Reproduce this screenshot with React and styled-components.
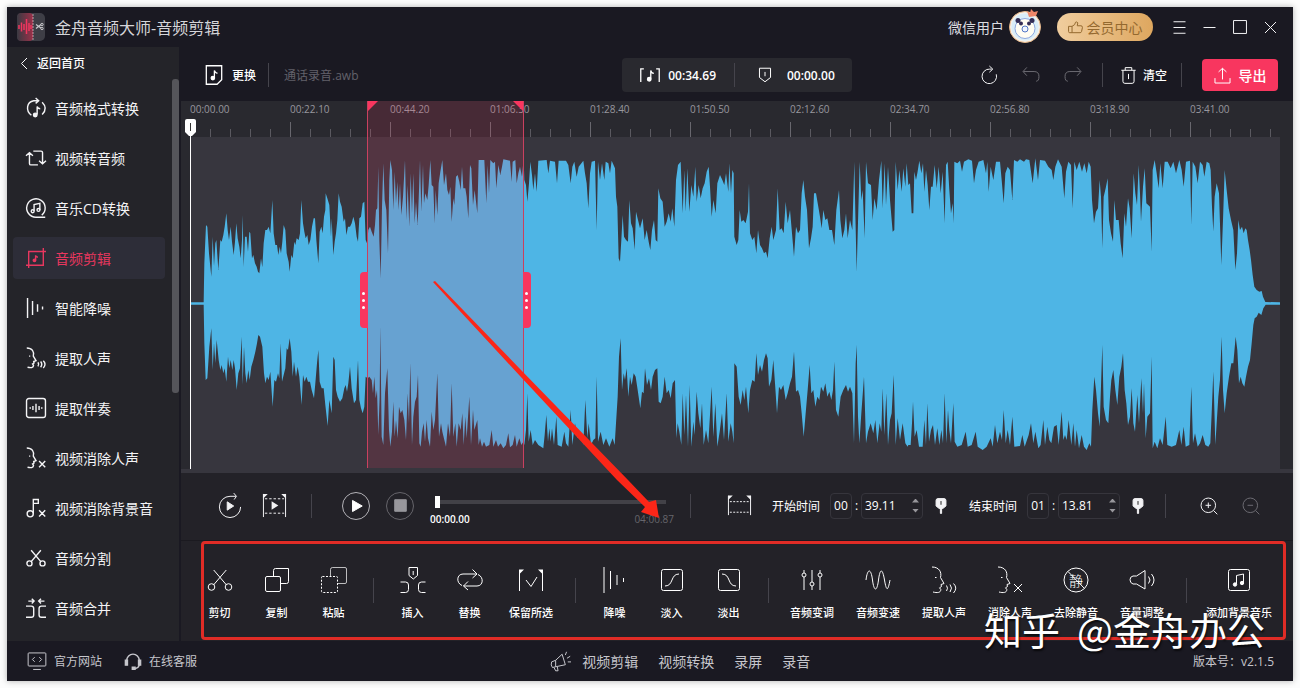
import { useState } from "react";
import { createGlobalStyle, styled } from "styled-components";

const DURATION = 240.87;

// Outline of the decoded audio, as x,y pairs, in blocks that start at `at`
const WAVE_BLOCKS = [
	{
		at: 0,
		top: `0,517 41,517 43,400 48,285 52,290 57,370 64,440 68,320 72,408 76,340 79,330 85,420 91,330 95,335 100,315 104,290 109,250 113,300 117,330 122,290 126,335 131,375 135,335 139,280 143,325 148,350 152,385 156,330 158,255 161,410 165,320 170,320 174,365 178,305 181,310 186,385 190,375 195,400 200,410 204,425 208,430 213,385 217,412 221,340 226,300 231,300 236,290 241,310 247,210 251,310 256,345 261,345 265,375 269,350 273,370 277,335 281,285 286,300 290,370 296,395 299,425 304,375 308,385 313,335 316,345 320,325 326,330 330,310 334,210 339,280 343,305 347,325 352,315 356,345 361,330 366,290 371,265 375,265 379,330 385,400 389,305 394,290 398,310 402,260 406,240 407,190 412,205 418,225 423,320 425,265 430,375 434,335 438,310 442,270 446,190 450,215 455,230 461,275 465,265 469,315 474,290 480,290 485,280 490,260 495,280 500,320 504,335 508,265 513,260 518,220 523,215 527,330 531,340 535,300 540,290 545,305 551,320 555,285 558,240 562,235 565,110 568,330 572,445 576,230 580,100 584,210 589,240 594,370 598,150 601,90 606,120 610,240 614,125 618,220 622,155 626,240 630,160 634,255 639,200 645,90 649,270 653,165 658,290 662,130 666,250 670,130 674,280 678,215 683,285 687,180 690,90 694,245 699,105 702,220 706,190 712,210 716,165 721,90 725,165 730,170 734,280 737,180 742,255 746,160 751,125 757,90 762,165 768,130 772,180 777,195 781,170 785,275 790,205 793,225 798,140 803,135 808,155 812,180 816,110 820,175 826,175 830,200 835,265 840,105 844,115 849,225 854,180 862,250 866,90 883,90 889,220 893,105 897,190 901,90 910,100 915,95 919,175 925,105 931,135 936,110 940,88 960,92 965,155 968,95 976,90 980,160 985,130 990,110 996,140 1001,85`,
		bottom: `0,524 41,524 43,640 47,750 52,745 58,650 64,595 68,720 72,640 76,700 80,630 86,690 91,720 95,705 100,730 104,715 109,755 114,680 118,715 122,690 127,720 131,690 135,715 140,780 145,730 150,715 155,620 158,765 162,650 166,730 170,760 175,720 179,750 184,710 190,690 196,665 201,640 205,615 210,620 217,650 222,730 226,760 231,740 236,750 241,725 248,830 253,750 258,755 264,730 268,745 272,640 276,755 281,735 286,715 290,655 294,660 299,625 304,665 308,740 312,695 318,740 323,710 328,740 335,825 339,735 344,755 349,740 354,755 360,755 365,780 372,805 376,760 381,700 385,660 389,755 395,775 401,775 406,825 413,888 418,810 425,850 430,680 434,690 438,780 443,800 450,815 457,805 463,775 467,765 471,785 475,760 480,710 485,775 492,820 498,810 504,690 508,810 513,835 518,850 523,830 527,740 533,745 538,740 545,750 549,790 553,740 557,805 561,780 565,915 569,800 571,590 575,920 580,945 585,790 592,715 597,900 601,950 606,905 610,815 614,920 618,870 623,925 627,830 632,850 637,840 643,870 648,930 653,790 657,880 661,700 666,945 670,860 675,815 680,800 684,735 688,940 692,950 696,905 701,880 705,935 710,870 714,925 720,950 725,845 730,900 735,870 742,730 747,920 753,880 757,905 768,950 774,880 780,920 785,760 790,920 796,880 800,950 806,880 812,900 817,850 821,945 826,860 830,925 838,800 843,945 849,840 853,900 862,870 866,945 870,925 876,950 882,935 888,950 898,945 905,900 910,950 918,930 924,950 932,940 940,955 948,945 955,910 960,952 968,945 975,915 980,950 988,925 994,945 1000,935`,
	},
	{
		at: 990,
		top: `13,150 18,165 22,215 27,160 31,95 36,135 40,180 45,130 50,185 55,92 80,90 85,130 90,92 105,95 111,160 116,92 138,92 145,105 152,160 157,110 163,95 170,140 176,110 190,92 195,130 200,160 205,235 210,130 215,95 225,92 230,300 234,95 240,150 246,100 253,150 257,95 265,100 270,130 275,92 285,115 288,200 292,230 296,385 300,395 304,330 308,255 312,320 318,330 324,335 328,210 333,280 338,295 344,360 348,245 354,270 360,295 368,265 374,330 380,300 386,335 391,360 396,300 402,270 407,330 412,335 415,175 421,205 428,215 434,290 440,275 446,250 452,275 457,235 463,290 468,150 474,105 482,95 488,250 493,120 497,245 502,115 508,245 514,165 520,200 526,110 530,215 536,165 542,205 548,175 554,160 560,125 566,110 570,170 575,260 580,210 587,250 592,160 600,135 607,150 613,165 618,130 625,185 628,100 633,190 637,120 641,130 643,320 650,345 655,330 659,240 664,275 670,270 677,280 684,245 687,160 690,310 697,330 703,320 709,370 714,300 720,345 726,355 732,370 738,365 743,385 749,325 755,290 760,330 768,300 773,175 779,300 785,295 791,310 797,215 803,280 810,240 816,310 822,380 828,290 834,310 840,300 845,190 850,150 855,200 861,240 867,355 873,325 878,290 882,190 888,190 894,225 900,260 905,295 910,240 916,270 922,265 928,300 936,300 943,345 949,240 957,180 961,270 967,325 973,300 978,250 983,325 990,270 997,300 1003,95 1006,250 1010,425 1015,240 1019,95 1024,210 1028,180 1034,325 1038,95 1044,160 1053,165 1058,270 1063,205 1070,240 1077,150 1084,92 1088,235 1094,100 1098,225 1104,110 1110,210 1118,305 1123,300 1127,95 1133,180 1138,120 1145,185 1150,115 1156,170 1160,100`,
		bottom: `13,945 18,900 22,790 26,935 32,900 38,945 45,930 55,945 70,955 74,915 79,855 84,935 88,895 92,935 96,895 102,945 109,860 113,945 125,950 133,905 138,940 145,950 152,840 157,945 165,880 172,925 180,905 190,945 196,810 202,925 206,880 213,945 220,930 226,925 230,740 234,935 242,905 250,945 258,925 268,950 278,925 284,945 288,880 293,800 297,680 302,625 306,780 311,730 315,750 320,715 325,800 330,740 335,765 341,730 347,740 353,780 361,835 366,785 371,790 375,715 381,765 387,745 393,780 398,740 405,720 412,715 416,815 422,820 428,800 434,740 440,790 446,780 452,805 458,760 465,750 469,925 473,880 478,905 484,945 488,790 493,915 498,795 504,950 509,765 514,950 520,875 524,915 530,785 535,850 541,895 546,820 551,945 558,900 565,940 575,770 580,920 586,820 592,950 599,905 606,850 612,930 620,790 625,935 632,880 637,905 641,940 643,700 650,710 656,800 662,825 668,780 673,810 678,770 685,850 690,780 697,750 704,755 709,670 714,735 720,705 726,725 732,690 738,670 743,685 747,770 754,750 760,690 765,760 771,850 777,770 783,780 790,765 797,810 803,790 810,760 816,740 822,665 828,785 834,780 840,800 845,850 851,920 857,850 863,780 869,705 874,790 880,780 886,830 892,800 898,810 903,770 910,785 916,760 922,800 928,785 934,810 939,780 943,695 948,840 955,860 962,800 970,780 978,765 984,785 990,770 997,790 1002,940 1007,700 1010,645 1014,860 1018,940 1024,850 1032,740 1038,940 1044,905 1052,880 1060,910 1066,870 1072,940 1079,880 1084,905 1088,775 1093,915 1099,790 1104,945 1110,870 1115,850 1121,735 1127,945 1133,865 1140,930 1148,880 1156,940 1163,950`,
	},
	{
		at: 2130,
		top: `25,165 30,160 35,250 40,250 43,125 48,150 52,130 58,92 64,130 69,100 73,185 78,120 83,165 88,240 93,170 98,170 104,105 110,175 116,110 122,190 128,125 134,280 138,105 143,95 148,180 153,250 158,220 161,280 163,95 172,100 180,92 186,125 192,95 205,88 216,92 222,160 228,120 236,95 250,90 258,130 262,95 266,185 272,110 280,150 288,95 300,95 305,150 311,220 316,130 323,110 330,120 337,210 342,90 352,95 360,88 372,95 378,88 388,90 398,160 406,85 414,150 420,90 435,92 445,110 455,120 460,150 466,110 474,88 485,110 493,205 498,125 505,95 513,105 518,235 523,95 530,120 538,95 546,125 553,100 560,130 566,95 572,110 576,210 582,280 588,245 594,235 599,150 603,200 607,355 611,200 617,175 623,145 627,270 633,310 639,335 643,210 648,270 656,270 662,340 668,385 673,250 678,290 684,205 689,235 695,325 701,130 706,190 711,225 716,105 720,190 723,275 729,170 734,115 739,220 750,230 755,365 758,120 764,90 770,130 776,175 781,100 788,175 794,95 803,95 812,115 820,95 828,130 838,90 845,120 851,170 858,95 870,92 874,285 878,95 886,110 893,160 900,95 908,105 913,140 920,95 928,100 932,120 936,230 940,305 944,200 950,160 957,190 964,405 969,270 974,120 980,180 986,235 993,270 1000,300 1006,420 1011,370 1015,270 1020,300 1026,290 1031,310 1036,295 1040,300 1044,330 1049,360 1053,390 1058,435 1063,470 1070,480 1078,485 1085,483 1089,500 1096,516 1140,517`,
		bottom: `25,945 32,945 36,880 39,815 44,920 50,900 57,950 68,950 73,870 78,945 82,820 87,935 93,900 99,885 105,945 112,895 118,945 124,900 129,940 134,790 139,940 144,840 148,900 153,940 160,820 164,935 172,950 185,945 197,905 203,950 215,945 227,905 233,950 248,960 260,950 272,925 278,950 285,885 292,940 300,905 306,930 311,840 317,940 323,900 330,945 337,860 343,950 360,948 367,915 374,950 386,915 393,880 400,940 406,905 415,955 422,945 430,870 435,945 442,890 448,930 454,940 462,890 470,885 476,945 485,845 490,930 495,915 500,930 506,870 514,945 520,880 525,950 530,900 537,955 545,915 552,950 560,960 568,940 573,950 577,840 583,740 588,780 594,850 599,890 607,645 611,830 618,870 625,880 630,800 634,750 640,720 646,780 652,825 658,740 664,710 669,670 674,780 679,820 684,885 690,860 695,775 700,880 705,905 712,795 717,880 724,745 729,850 732,760 737,925 742,860 750,850 755,680 758,955 764,935 772,955 780,925 788,945 797,860 802,945 815,950 828,945 838,900 844,945 851,890 857,950 868,945 874,770 879,940 885,910 893,950 900,940 908,915 916,945 925,950 931,940 935,850 940,725 946,945 950,880 955,800 960,750 965,620 969,780 974,850 980,790 987,740 994,700 1000,700 1007,620 1012,660 1017,760 1022,740 1027,760 1033,770 1038,740 1044,710 1050,690 1055,640 1060,585 1064,565 1070,560 1076,548 1084,555 1090,535 1097,524 1140,524`,
	},
];

function readEdge(edge) {
	return WAVE_BLOCKS.flatMap((block) =>
		block[edge].split(" ").map((pair) => {
			const [x, y] = pair.split(",").map(Number);
			return `${x + block.at},${y}`;
		})
	);
}

const wavePoints = [...readEdge("top"), ...readEdge("bottom").reverse()].join(" ");

const rulerLabels = [
	"00:00.00",
	"00:22.10",
	"00:44.20",
	"01:06.30",
	"01:28.40",
	"01:50.50",
	"02:12.60",
	"02:34.70",
	"02:56.80",
	"03:18.90",
	"03:41.00",
];

// Drawings on a 26 x 26 grid
const shapes = {
	convert: (
		<>
			<path d='M7 22.500C-1 16 1 5 10 3.500h6M12.500 0l4 3.500-4 3.500M21 5.500c5 5 5 11 0 16' />
			<path d='M14.500 21.500V11q1 3 4 3' />
			<circle cx='12' cy='22' r='2.300' fill='currentColor' />
		</>
	),
	swap: <path d='M4.500 6v14q0 2 2 2h9M0 10l4.500-4L9 10M9.500 4h10q2 0 2 2v14M17 16.500l4.500 4 4.500-4' />,
	disc: (
		<>
			<path d='M13 25a12 12 0 1 1 7.500-2.700M13 25h12' />
			<path d='M10.500 17V8.500l7.500-1.500v8.500' />
			<circle cx='8.700' cy='17.200' r='1.900' />
			<circle cx='16.200' cy='15.500' r='1.900' />
		</>
	),
	crop: (
		<>
			<path d='M3.500 26V4.500H26M0 22.500h22.500V0' />
			<path d='M12.500 16V9.500q0 2 3 2.500' />
			<circle cx='11' cy='16' r='1.600' fill='currentColor' />
		</>
	),
	bars: <path d='M2 0v26M8.500 4v18M15 8v10M21.500 11v4' />,
	voice: (
		<>
			<path d='M1 0C8 0 11 5 9.500 10.500l3.500 6-3 1 .5 2-2 1.300 1.300 1.700C9.800 26 6 26 2 25' />
			<path d='M4 10.500h1.500M15.500 18.500q2 2.700 0 5.500M19 17.500q3 3.500 0 7.500M22.500 16.500q4.500 4.500 0 9.500' />
		</>
	),
	mute: (
		<>
			<path d='M1 0C8 0 11 5 9.500 10.500l3.500 6-3 1 .5 2-2 1.300 1.300 1.700C9.800 26 6 26 2 25' />
			<path d='M4 10.500h1.500M17 17l8 8M25 17l-8 8' />
		</>
	),
	backing: (
		<>
			<rect x='.700' y='.700' width='24.600' height='24.600' rx='3' />
			<path d='M5.500 12v2M9 10.500v5M13 7.500v11M17 10.500v5M20.500 12v2' />
		</>
	),
	noteOff: (
		<>
			<path d='M9.500 20V2h6.500v5H9.500M17 16l8 8M25 16l-8 8' />
			<circle cx='5.500' cy='20.500' r='4' />
		</>
	),
	scissors: (
		<>
			<path d='M6.700 3l12.800 15M19.300 3L6.500 18' />
			<circle cx='4.500' cy='20' r='3.300' />
			<circle cx='21.500' cy='20' r='3.300' />
		</>
	),
	merge: (
		<path d='M0 10.500h7q3 0 3 3v8.500q0 3-3 3H0M26 10.500h-6q-3 0-3 3v8.500q0 3 3 3H26M3 4h7.500M7.500 1l3 3-3 3M24 4h-7.500M19.500 1l-3 3 3 3' />
	),
	copy: (
		<>
			<rect x='1.500' y='9.500' width='15' height='15' rx='1.500' />
			<path d='M9.500 9.500v-6q0-2 2-2h13v13q0 2-2 2h-6' />
		</>
	),
	paste: (
		<>
			<rect x='.500' y='9.500' width='16' height='16' rx='1' strokeDasharray='2 1.500' />
			<path d='M9.500 9.500v-7q0-2 2-2H24q1.500 0 1.500 1.500v13q0 1.500-1.500 1.500h-7.500' opacity='.7' />
		</>
	),
	insert: (
		<path d='M9 .500h8.500v8l-4.200 3.500L9 8.500zM13.200 4v4M.500 15h5q3 0 3 3v4.500q0 3-3 3h-5M25.500 15h-4q-3 0-3 3v4.500q0 3 3 3h4' />
	),
	replace: (
		<path d='M5 18.500C-1 16-.500 7 6 7h14M15.500 2.500L20 7l-4.500 4M21 7.500c6 2.500 5.500 11.500-1 11.500H6.500M11 14.500L6.500 19l4.500 4' />
	),
	keep: (
		<>
			<path d='M1.500 3v21M24.500 3v21M8 13l5 6.500L19 10' />
			<path d='M1 2.500h5l-5 5zM25 2.500h-5l5 5z' fill='currentColor' stroke='none' />
		</>
	),
	fadeIn: (
		<>
			<rect x='2.500' y='2.500' width='21' height='21' rx='2' />
			<path d='M6 19c9 0 5-12 14-12' />
		</>
	),
	fadeOut: (
		<>
			<rect x='2.500' y='2.500' width='21' height='21' rx='2' />
			<path d='M6 7c9 0 5 12 14 12' />
		</>
	),
	sliders: (
		<>
			<path d='M5 3v3M5 10v13M13 3v12M13 19v4M21 3v3M21 10v13' />
			<circle cx='5' cy='8' r='2' />
			<circle cx='13' cy='17' r='2' />
			<circle cx='21' cy='8' r='2' />
		</>
	),
	wave: <path d='M1 13C2.500 1 6 1 7.500 13s4.500 12 6 0 4-12 6 0 3.500 11 5.500 0' />,
	silence: (
		<>
			<circle cx='13' cy='13' r='12' />
			<text
				x='13'
				y='18.500'
				textAnchor='middle'
				fontSize='14'
				fontWeight='300'
				fill='currentColor'
				stroke='none'
			>
				静
			</text>
			<path d='M5 4.500l16.500 17' />
		</>
	),
	volume: (
		<path d='M16 3.500v18.500L7.500 17H4q-3-1-3-4.200T4 9h3.500zM19.500 9.500q3 3.500 0 7M22.500 7q5 6 0 12' />
	),
	music: (
		<>
			<rect x='2.500' y='2.500' width='21' height='21' rx='2' />
			<path d='M10.500 17V8.500l7-1.500v8.500' />
			<circle cx='9' cy='17.500' r='1.700' fill='currentColor' />
			<circle cx='16' cy='16' r='1.700' fill='currentColor' />
		</>
	),
	replay: (
		<>
			<path d='M24.500 14A11.500 11.500 0 1 1 13 2.500h6.500M17-1l3 3.500L17.500 6' />
			<path d='M10 8.500v9l7-4.500z' fill='currentColor' />
		</>
	),
	playRange: (
		<>
			<path d='M1.500 1v24M24.500 1v24' />
			<path d='M1 1h5L1 6zM25 1h-5l5 5zM10 8.500v9l7-4.500z' fill='currentColor' stroke='none' />
			<path d='M3 6h20M3 21h20' strokeDasharray='2.500 2' />
		</>
	),
	range: (
		<>
			<path d='M1.500 3v20M24.500 3v20' />
			<path d='M1 2.500h5l-5 5zM25 2.500h-5l5 5z' fill='currentColor' stroke='none' />
			<path d='M3 9h20M3 20h20' strokeDasharray='2 1.500' />
		</>
	),
	play: <path d='M8 5v16l14-8z' fill='currentColor' />,
	stop: <path d='M3 3h20v20H3z' fill='currentColor' />,
	pin: (
		<>
			<path d='M8 1h10q3 0 3 3v9l-5 4h-6l-5-4V4q0-3 3-3zM12 17h2v8h-2z' fill='currentColor' />
			<path d='M13 5v6' stroke='#222' />
		</>
	),
	zoomIn: (
		<>
			<circle cx='12' cy='12' r='10.500' />
			<path d='M19.500 19.500L25 25M12 8v8M8 12h8' />
		</>
	),
	zoomOut: (
		<>
			<circle cx='12' cy='12' r='10.500' />
			<path d='M19.500 19.500L25 25M8 12h8' />
		</>
	),
	file: (
		<>
			<path d='M3 1h20v18l-6 6H3z' />
			<path d='M13.500 17V7q1 3 4 4' />
			<circle cx='11.500' cy='17' r='2.200' fill='currentColor' />
		</>
	),
	noteRange: (
		<>
			<path d='M5 5H1v17M21 5h4v17M14 18V7q.500 3.500 4 4' />
			<circle cx='12' cy='18.500' r='2.300' fill='currentColor' />
		</>
	),
	shield: <path d='M4 2h18v15l-9 7-9-7zM13 8v7' />,
	reload: <path d='M23.500 12A10.500 10.500 0 1 1 14 4.500h3M13.500 0l5 4.500-5 4.500' />,
	undo: <path d='M7 2L1.500 8 7 14M2 8h15.500Q24.500 8 24.500 15t-4 7' />,
	redo: <path d='M19 2l5.500 6L19 14M24 8H8.500Q1.500 8 1.500 15t4 7' />,
	trash: <path d='M2 5h22M8 5V1h10v4M4.500 5v17q0 3 3 3h11q3 0 3-3V5M13 10.500v8' />,
	upload: <path d='M13 19V2M7 7.500L13 2l6 5.500M1.500 17v7.500h23V17' />,
	back: <path d='M18 2L7 13l11 11' />,
	thumb: (
		<path d='M1 11h6v11h14q2 0 2.500-2l1.500-7q0-3-2.500-3H16l1-5q-1.500-3-4-1l-1.500 4L7 11M1 11v9q0 2 2 2h4' />
	),
	site: (
		<>
			<rect x='1.500' y='2.500' width='23' height='17' rx='1' />
			<path d='M10 8l-3 3 3 3M16 8l3 3-3 3M8 24h10' />
		</>
	),
	headset: (
		<>
			<path d='M4 15v-3a9 9 0 0 1 18 0v3M22 18q0 5-7 6' />
			<path d='M2 12h3v7H2zM21 12h3v7h-3zM12 22h4v3h-4z' fill='currentColor' />
		</>
	),
	horn: (
		<path d='M2 13.500l5-2v8l-4 1q-2.500-3-1-7zM7 11.500l8-7.500 4 13-12 2.500M5 20.500l2 4h3l-1-5M19 5l1.500-4M21 9l4-2.500M22 13.500h4' />
	),
	menu: <path d='M1 1.500h24M1 13h24M1 24.500h24' />,
	minimize: <path d='M1 13h24' />,
	maximize: <path d='M1 1h24v24H1z' />,
	close: <path d='M2 2l22 22M24 2L2 24' />,
};

function Icon({ name, size = 26, stroke = 1 }) {
	return (
		<IconBox
			width={size}
			height={size}
			viewBox='0 0 26 26'
			strokeWidth={(stroke * 26) / size}
			aria-hidden='true'
		>
			{shapes[name]}
		</IconBox>
	);
}

const menuItems = [
	["convert", "音频格式转换"],
	["swap", "视频转音频"],
	["disc", "音乐CD转换"],
	["crop", "音频剪辑"],
	["bars", "智能降噪"],
	["voice", "提取人声"],
	["backing", "提取伴奏"],
	["mute", "视频消除人声"],
	["noteOff", "视频消除背景音"],
	["scissors", "音频分割"],
	["merge", "音频合并"],
];

const toolGroups = [
	[
		["scissors", "剪切"],
		["copy", "复制"],
		["paste", "粘贴"],
	],
	[
		["insert", "插入"],
		["replace", "替换"],
		["keep", "保留所选"],
	],
	[
		["bars", "降噪"],
		["fadeIn", "淡入"],
		["fadeOut", "淡出"],
	],
	[
		["sliders", "音频变调"],
		["wave", "音频变速"],
		["voice", "提取人声"],
		["mute", "消除人声"],
		["silence", "去除静音"],
		["volume", "音量调整"],
	],
	[["music", "添加背景音乐"]],
];

const toolWidths = { 2: 57, 4: 66, 6: 84 };

function TitleBar() {
	return (
		<TitleRow>
			<AppLogo viewBox='0 0 28 28' aria-hidden='true'>
				<defs>
					<linearGradient id='logoFade'>
						<stop offset='0' stopColor='#3a3a42' />
						<stop offset='1' stopColor='#9c3049' />
					</linearGradient>
				</defs>
				<rect width='28' height='28' rx='5' fill='#3e3e46' />
				<rect width='16' height='28' rx='4' fill='url(#logoFade)' />
				<path
					d='M2 12v4M4.500 9.500v9M7 11v6M9.500 6v15M12 10v8M14 12v4'
					stroke='#f0365f'
					strokeWidth='1.500'
				/>
				<path d='M16 1v26' stroke='#e8c7cf' strokeDasharray='2 1' opacity='.7' />
				<path d='M19 11.500l5 3.500M19 15.500l5-4' stroke='#c8c8cc' strokeWidth='1.200' />
				<circle cx='25' cy='11.500' r='1.200' fill='none' stroke='#c8c8cc' />
				<circle cx='25' cy='15.500' r='1.200' fill='none' stroke='#c8c8cc' />
			</AppLogo>
			<AppTitle>金舟音频大师-音频剪辑</AppTitle>
			<UserName>微信用户</UserName>
			<Avatar viewBox='0 0 34 36' aria-hidden='true'>
				<circle cx='17' cy='19' r='15.500' fill='#f4f1ea' stroke='#eab888' />
				<circle cx='17' cy='19' r='13.500' fill='#d9edf8' />
				<ellipse cx='17' cy='20.500' rx='10' ry='10' fill='#fffdf2' stroke='#8ea8df' />
				<circle cx='10' cy='12.500' r='2.500' fill='#332d55' />
				<circle cx='24' cy='12.500' r='2.500' fill='#332d55' />
				<ellipse cx='13' cy='15.500' rx='2' ry='2' fill='#332d55' />
				<ellipse cx='21' cy='15.500' rx='2' ry='2' fill='#332d55' />
				<circle cx='17' cy='21' r='3' fill='#eef5ff' stroke='#5277c5' />
				<path d='M19 3l3 2 1-4 3 3 4-1-2 5-7 1z' fill='#ef8668' />
			</Avatar>
			<VipButton>
				<Icon name='thumb' size={15} />
				会员中心
			</VipButton>
			<WindowButtons>
				<IconButton aria-label='菜单'>
					<Icon name='menu' size={13} />
				</IconButton>
				<IconButton aria-label='最小化'>
					<Icon name='minimize' size={13} />
				</IconButton>
				<IconButton aria-label='最大化'>
					<Icon name='maximize' size={14} />
				</IconButton>
				<IconButton aria-label='关闭'>
					<Icon name='close' size={13} />
				</IconButton>
			</WindowButtons>
		</TitleRow>
	);
}

function Sidebar() {
	const [active, setActive] = useState("音频剪辑");

	return (
		<SideArea>
			<SideMain>
				<BackButton>
					<Icon name='back' size={13} />
					返回首页
				</BackButton>
				<Menu>
					{menuItems.map(([icon, label]) => (
						<MenuButton key={label} $active={active === label} onClick={() => setActive(label)}>
							<Icon name={icon} size={20} stroke={1.4} />
							{label}
						</MenuButton>
					))}
				</Menu>
			</SideMain>
			<ScrollTrack>
				<ScrollThumb />
			</ScrollTrack>
		</SideArea>
	);
}

function TopBar() {
	return (
		<TopRow>
			<FileGroup>
				<TextButton>
					<Icon name='file' size={20} stroke={1.3} />
					更换
				</TextButton>
				<Divider />
				<FileName>通话录音.awb</FileName>
			</FileGroup>
			<TimePill>
				<TimePart>
					<Icon name='noteRange' size={20} stroke={1.3} />
					00:34.69
				</TimePart>
				<Divider />
				<TimePart $wide>
					<Icon name='shield' size={16} />
					00:00.00
				</TimePart>
			</TimePill>
			<ActionGroup>
				<HistoryGroup>
					<IconButton aria-label='重置'>
						<Icon name='reload' size={18} />
					</IconButton>
					<IconButton aria-label='撤销' $dim>
						<Icon name='undo' size={18} />
					</IconButton>
					<IconButton aria-label='重做' $dim>
						<Icon name='redo' size={18} />
					</IconButton>
				</HistoryGroup>
				<Divider />
				<TextButton $tight>
					<Icon name='trash' size={17} />
					清空
				</TextButton>
				<Divider />
				<ExportButton>
					<Icon name='upload' size={17} />
					导出
				</ExportButton>
			</ActionGroup>
		</TopRow>
	);
}

function Timeline({ start, end }) {
	const left = (start / DURATION) * 100;
	const width = ((end - start) / DURATION) * 100;

	return (
		<TimelineArea>
			<Track>
				<Ruler>
					{rulerLabels.map((label) => (
						<RulerCell key={label}>{label}</RulerCell>
					))}
				</Ruler>
				<WaveBox>
					<WaveSvg viewBox='0 21 3270 996' preserveAspectRatio='none' aria-hidden='true'>
						<polygon points={wavePoints} />
					</WaveSvg>
				</WaveBox>
				<Selection style={{ left: `${left}%`, width: `${width}%` }}>
					<Corner />
					<Corner $right />
					<Handle>
						<i />
						<i />
						<i />
					</Handle>
					<Handle $right>
						<i />
						<i />
						<i />
					</Handle>
				</Selection>
				<Playhead>
					<PlayheadFlag viewBox='0 0 11 17' aria-hidden='true'>
						<path d='M0 2q0-2 2-2h7q2 0 2 2v11l-4 4H4l-4-4z' fill='#fff' />
						<path d='M5.500 4v8' stroke='#333' />
					</PlayheadFlag>
				</Playhead>
			</Track>
		</TimelineArea>
	);
}

function TimeField({ id, label, minutes, seconds }) {
	return (
		<TimeGroup>
			<label htmlFor={id}>{label}</label>
			<MinuteInput id={id} defaultValue={minutes} />
			<Colon>:</Colon>
			<SecondBox>
				<SecondInput aria-label={`${label} 秒`} defaultValue={seconds} />
				<Spinner>
					<SpinButton aria-label='增加' />
					<SpinButton aria-label='减少' $down />
				</Spinner>
			</SecondBox>
			<IconButton aria-label={`标记${label}`}>
				<Icon name='pin' size={16} />
			</IconButton>
		</TimeGroup>
	);
}

function Controls() {
	return (
		<ControlRow>
			<ControlGroup>
				<IconButton aria-label='重新播放'>
					<Icon name='replay' size={24} />
				</IconButton>
				<IconButton aria-label='播放选区'>
					<Icon name='playRange' size={25} />
				</IconButton>
			</ControlGroup>
			<Divider />
			<PlayGroup>
				<RoundButton aria-label='播放'>
					<Icon name='play' size={18} />
				</RoundButton>
				<RoundButton aria-label='停止' $dim>
					<Icon name='stop' size={15} />
				</RoundButton>
				<Scrubber>
					<Range type='range' aria-label='播放进度' min='0' max={DURATION} step='0.01' defaultValue='0' />
					<ScrubTimes>
						<b>00:00.00</b>
						<span>04:00.87</span>
					</ScrubTimes>
				</Scrubber>
			</PlayGroup>
			<Divider />
			<RangeGroup>
				<IconButton aria-label='选择范围'>
					<Icon name='range' size={25} />
				</IconButton>
				<TimeField id='start' label='开始时间' minutes='00' seconds='39.11' />
				<TimeField id='end' label='结束时间' minutes='01' seconds='13.81' />
			</RangeGroup>
			<Divider />
			<ZoomGroup>
				<IconButton aria-label='放大'>
					<Icon name='zoomIn' size={18} />
				</IconButton>
				<IconButton aria-label='缩小' $dim>
					<Icon name='zoomOut' size={18} />
				</IconButton>
			</ZoomGroup>
		</ControlRow>
	);
}

function Tools() {
	return (
		<ToolRow>
			{toolGroups.map((group) => (
				<ToolGroup key={group[0][1]}>
					{group.map(([icon, label]) => (
						<ToolButton key={label} $width={toolWidths[label.length]}>
							<Icon name={icon} size={26} />
							{label}
						</ToolButton>
					))}
				</ToolGroup>
			))}
			<RedFrame />
		</ToolRow>
	);
}

function Footer() {
	return (
		<FooterRow>
			<SupportLinks>
				<FooterLink href='#site'>
					<Icon name='site' size={20} />
					官方网站
				</FooterLink>
				<FooterLink href='#service'>
					<Icon name='headset' size={18} stroke={1.4} />
					在线客服
				</FooterLink>
			</SupportLinks>
			<ProductLinks>
				<Icon name='horn' size={21} />
				<FooterLink href='#edit'>视频剪辑</FooterLink>
				<FooterLink href='#convert'>视频转换</FooterLink>
				<FooterLink href='#screen'>录屏</FooterLink>
				<FooterLink href='#record'>录音</FooterLink>
			</ProductLinks>
			<Version>版本号：v2.1.5</Version>
		</FooterRow>
	);
}

export default function App() {
	return (
		<>
			<GlobalStyle />
			<Window>
				<TitleBar />
				<Body>
					<Sidebar />
					<Main>
						<TopBar />
						<Timeline start={39.11} end={73.81} />
						<Controls />
						<Tools />
						<Arrow viewBox='0 0 228 238' aria-hidden='true'>
							<path d='M0 1l2-1 86 89 107 110 21 22 7-2 3 18-18-6 4-5-28-27-97-104z' />
						</Arrow>
					</Main>
				</Body>
				<Footer />
				<Watermark>
					<span>知乎</span>
					<span>@金舟办公</span>
				</Watermark>
			</Window>
		</>
	);
}

const GlobalStyle = createGlobalStyle`
	* {
		box-sizing: border-box;
	}

	body {
		margin: 0;
		background: #fcfcfc;
		font-family: "Open Sans", "Noto Sans CJK SC", sans-serif;
		font-size: 12px;
		color: #ffffff;
	}

	button,
	input {
		font: inherit;
		color: inherit;
		margin: 0;
		padding: 0;
		border: none;
		background: none;
	}

	button {
		cursor: pointer;
	}

	a {
		color: inherit;
		text-decoration: none;
	}
`;

const Window = styled.div`
	display: flex;
	flex-direction: column;
	position: relative;

	min-height: calc(100vh - 14px);
	margin: 7px;

	background: #1a1922;
	box-shadow: 0 0 6px rgba(0, 0, 0, 0.3);
`;

const IconBox = styled.svg`
	display: block;
	flex: none;
	overflow: visible;
	fill: none;
	stroke: currentColor;
`;

const IconButton = styled.button`
	display: flex;
	align-items: center;
	justify-content: center;
	color: ${({ $dim }) => ($dim ? "#6c6b72" : "#f2f2f4")};
`;

const Divider = styled.div`
	flex: none;
	width: 1px;
	height: 24px;
	background: #45444c;
`;

const TitleRow = styled.header`
	display: flex;
	align-items: center;
	height: 40px;
	padding: 0 16px 0 10px;
`;

const AppLogo = styled.svg`
	width: 28px;
	height: 28px;
`;

const AppTitle = styled.h1`
	margin: 0 auto 0 10px;
	font-size: 16px;
	font-weight: 400;
	color: #d5d5d9;
`;

const UserName = styled.span`
	font-size: 14px;
	color: #dcdce0;
`;

const Avatar = styled.svg`
	width: 34px;
	height: 36px;
	margin: 0 15px 2px 4px;
`;

const VipButton = styled.button`
	display: flex;
	align-items: center;
	justify-content: center;
	gap: 4px;

	width: 96px;
	height: 28px;

	border-radius: 14px;
	background: linear-gradient(90deg, #f0cd9e, #dea75f);
	font-size: 14px;
	color: #94692f;
`;

const WindowButtons = styled.div`
	display: flex;
	gap: 17px;
	margin-left: 20px;
`;

const Body = styled.div`
	display: flex;
	flex: 1;
`;

const SideArea = styled.nav`
	display: flex;
	flex: none;
	width: 172px;
	background: #242429;
`;

const SideMain = styled.div`
	flex: 1;
`;

const BackButton = styled.button`
	display: flex;
	align-items: center;
	gap: 6px;
	height: 32px;
	padding-left: 11px;
	font-weight: 500;
`;

const Menu = styled.div`
	display: flex;
	flex-direction: column;
	gap: 8px;
	padding: 8px 7px 11px 6px;
`;

const MenuButton = styled.button`
	display: flex;
	align-items: center;
	gap: 9px;

	height: 42px;
	padding-left: 13px;

	border-radius: 4px;
	background: ${({ $active }) => ($active ? "#2d2d38" : "transparent")};
	font-size: 14px;
	white-space: nowrap;
	color: ${({ $active }) => ($active ? "#e8375f" : "#f4f4f6")};
`;

const ScrollTrack = styled.div`
	width: 7px;
	padding-top: 32px;
`;

const ScrollThumb = styled.div`
	height: 314px;
	border-radius: 3px;
	background: #55555a;
`;

const Main = styled.main`
	display: flex;
	flex-direction: column;
	flex: 1;
	position: relative;
	min-width: 0;
	margin-left: 2px;
`;

const TopRow = styled.div`
	display: grid;
	grid-template-columns: 1fr auto 1fr;
	align-items: center;
	height: 54px;
	padding: 2px 15px 0 15px;
`;

const FileGroup = styled.div`
	display: flex;
	align-items: center;
	gap: 12px;
	padding-left: 8px;
`;

const ActionGroup = styled.div`
	display: flex;
	align-items: center;
	justify-content: flex-end;
	gap: 20px;
`;

const HistoryGroup = styled.div`
	display: flex;
	gap: 24px;
`;

const TextButton = styled.button`
	display: flex;
	align-items: center;
	gap: ${({ $tight }) => ($tight ? "6px" : "8px")};
	margin: ${({ $tight }) => ($tight ? "0 -6px 0 -3px" : "0")};
	font-weight: 500;
`;

const FileName = styled.span`
	margin-left: 3px;
	color: #62616a;
`;

const TimePill = styled.div`
	display: flex;
	align-items: center;
	gap: 18px;

	height: 34px;
	padding: 0 17px 0 18px;

	border-radius: 4px;
	background: #29292f;
`;

const TimePart = styled.span`
	display: flex;
	align-items: center;
	gap: ${({ $wide }) => ($wide ? "14px" : "8px")};
	padding-left: ${({ $wide }) => ($wide ? "4px" : "0")};
	font-weight: 600;
`;

const ExportButton = styled.button`
	display: flex;
	align-items: center;
	justify-content: center;
	gap: 8px;

	width: 76px;
	height: 32px;

	border-radius: 4px;
	background: #f8365f;
	font-size: 14px;
	font-weight: 500;
`;

const TimelineArea = styled.section`
	display: flex;
	flex: 1;
	padding: 0 13px 4px 9px;
	background: linear-gradient(#37363e, #37363e) bottom / 100% 4px no-repeat #29292f;
`;

const Track = styled.div`
	display: flex;
	flex-direction: column;
	flex: 1;
	position: relative;
	min-width: 0;
`;

const Ruler = styled.div`
	display: flex;
	height: 36px;
	overflow: hidden;
	background:
		repeating-linear-gradient(90deg, #68676e 0 1px, transparent 1px 100px) bottom / 100% 15px no-repeat,
		repeating-linear-gradient(90deg, #5a5960 0 1px, transparent 1px 20px) bottom / 100% 8px no-repeat;
`;

const RulerCell = styled.span`
	flex: 0 0 100px;
	font-size: 10px;
	line-height: 17px;
	color: #98979e;
`;

const WaveBox = styled.div`
	flex: 1;
	display: flex;
	min-height: 332px;
	background: #37363e;
`;

const WaveSvg = styled.svg`
	width: 100%;
	height: 332px;
	margin: auto 0;
	fill: #4eb5e5;
`;

const Selection = styled.div`
	position: absolute;
	top: 0;
	bottom: 1px;
	border: solid #c9415f;
	border-width: 0 1px;
	background: rgba(248, 54, 95, 0.15);
`;

const Corner = styled.div`
	position: absolute;
	top: 0;
	${({ $right }) => ($right ? "right: 0;" : "left: 0;")}
	width: 10px;
	height: 10px;
	background: #f8365f;
	clip-path: ${({ $right }) =>
		$right ? "polygon(0 0, 100% 0, 100% 100%)" : "polygon(0 0, 100% 0, 0 100%)"};
`;

const Handle = styled.div`
	display: flex;
	flex-direction: column;
	align-items: center;
	justify-content: center;
	gap: 4px;

	position: absolute;
	top: 171px;
	${({ $right }) => ($right ? "right: -8px;" : "left: -8px;")}
	width: 8px;
	height: 56px;

	border-radius: ${({ $right }) => ($right ? "0 4px 4px 0" : "4px 0 0 4px")};
	background: #f8365f;
	cursor: ew-resize;

	i {
		width: 3px;
		height: 3px;
		border-radius: 50%;
		background: #ffffff;
	}
`;

const Playhead = styled.div`
	position: absolute;
	top: 18px;
	bottom: 0;
	left: 0;
	width: 1px;
	background: #ffffff;
`;

const PlayheadFlag = styled.svg`
	position: absolute;
	top: 0;
	left: -5px;
	width: 11px;
	height: 17px;
`;

const ControlRow = styled.div`
	display: flex;
	align-items: center;
	height: 68px;
	padding: 0 33px 2px 37px;
	border-bottom: 1px solid #1b1a20;
	background: #232228;
`;

const ControlGroup = styled.div`
	display: flex;
	align-items: center;
	gap: 20px;
	margin-right: 24px;
`;

const PlayGroup = styled.div`
	display: flex;
	align-items: center;
	flex: 1;
	gap: 16px;
	margin: 0 16px 0 30px;
`;

const RoundButton = styled.button`
	display: flex;
	align-items: center;
	justify-content: center;

	width: 28px;
	height: 28px;

	border: 1px solid ${({ $dim }) => ($dim ? "#66656b" : "#b4b3b8")};
	border-radius: 50%;
	color: ${({ $dim }) => ($dim ? "#98979c" : "#ffffff")};
`;

const Scrubber = styled.div`
	display: flex;
	flex-direction: column;
	flex: 1;
	min-width: 100px;
	padding-top: 14px;
`;

const Range = styled.input`
	appearance: none;
	height: 12px;
	margin: 0 8px 0 5px;

	&::-webkit-slider-runnable-track {
		height: 4px;
		background: #424147;
	}

	&::-webkit-slider-thumb {
		appearance: none;
		width: 5px;
		height: 12px;
		margin-top: -4px;
		background: #ffffff;
	}
`;

const ScrubTimes = styled.div`
	display: flex;
	justify-content: space-between;
	font-size: 10px;
	line-height: 22px;
	color: #66656b;

	b {
		font-weight: 600;
		color: #ffffff;
	}
`;

const RangeGroup = styled.div`
	display: flex;
	align-items: center;
	gap: 20px;
	margin: 0 19px 0 36px;
`;

const TimeGroup = styled.div`
	display: flex;
	align-items: center;

	label {
		margin-right: 10px;
	}
`;

const MinuteInput = styled.input`
	width: 22px;
	height: 26px;
	border: 1px solid #36353c;
	border-radius: 4px;
	text-align: center;
`;

const Colon = styled.span`
	width: 9px;
	text-align: center;
`;

const SecondBox = styled.div`
	display: flex;
	align-items: center;

	width: 62px;
	height: 26px;
	margin-right: 10px;
	padding: 0 3px;

	border: 1px solid #36353c;
	border-radius: 4px;
`;

const SecondInput = styled.input`
	width: 47px;
`;

const Spinner = styled.span`
	display: flex;
	flex-direction: column;
	gap: 6px;
`;

const SpinButton = styled.button`
	width: 7px;
	height: 4px;
	background: #98979c;
	clip-path: ${({ $down }) =>
		$down ? "polygon(0 0, 100% 0, 50% 100%)" : "polygon(50% 0, 100% 100%, 0 100%)"};
`;

const ZoomGroup = styled.div`
	display: flex;
	gap: 24px;
	margin-left: 34px;
`;

const ToolRow = styled.div`
	display: flex;
	position: relative;
	height: 100px;
	padding: 26px 0 0 10px;
	background: #232228;
`;

const ToolGroup = styled.div`
	display: flex;

	& + &::before {
		content: "";
		width: 1px;
		height: 25px;
		margin: 11px 10px 0 11px;
		background: #45444c;
	}
`;

const ToolButton = styled.button`
	display: flex;
	flex-direction: column;
	align-items: center;
	gap: 12px;

	width: ${({ $width }) => $width}px;
	height: 54px;

	font-size: 11px;
	font-weight: 500;
	line-height: 16px;
	white-space: nowrap;
`;

const RedFrame = styled.div`
	position: absolute;
	inset: 0 7px 1px 20px;
	border: 3px solid #e02c26;
	border-radius: 4px;
	pointer-events: none;
`;

const Arrow = styled.svg`
	position: absolute;
	top: 234px;
	left: 252px;
	width: 228px;
	height: 238px;
	fill: #fb2618;
	pointer-events: none;
`;

const FooterRow = styled.footer`
	display: grid;
	grid-template-columns: 9fr auto 8fr;
	align-items: center;
	height: 40px;
	color: #c6c6cc;
`;

const SupportLinks = styled.div`
	display: flex;
	align-items: center;
	gap: 22px;
	padding-left: 20px;
`;

const ProductLinks = styled.div`
	display: flex;
	align-items: center;
	gap: 20px;
	font-size: 14px;

	> svg {
		margin-right: -9px;
	}
`;

const FooterLink = styled.a`
	display: flex;
	align-items: center;
	gap: 7px;
`;

const Version = styled.span`
	padding-right: 19px;
	text-align: right;
`;

const Watermark = styled.div`
	display: flex;
	gap: 17px;
	position: absolute;
	right: 28px;
	bottom: 24px;
	font-family: "Noto Sans CJK SC", sans-serif;
	font-size: 38px;
	line-height: 56px;
	text-shadow: 1px 2px 2px rgba(0, 0, 0, 0.7);
	pointer-events: none;
`;
